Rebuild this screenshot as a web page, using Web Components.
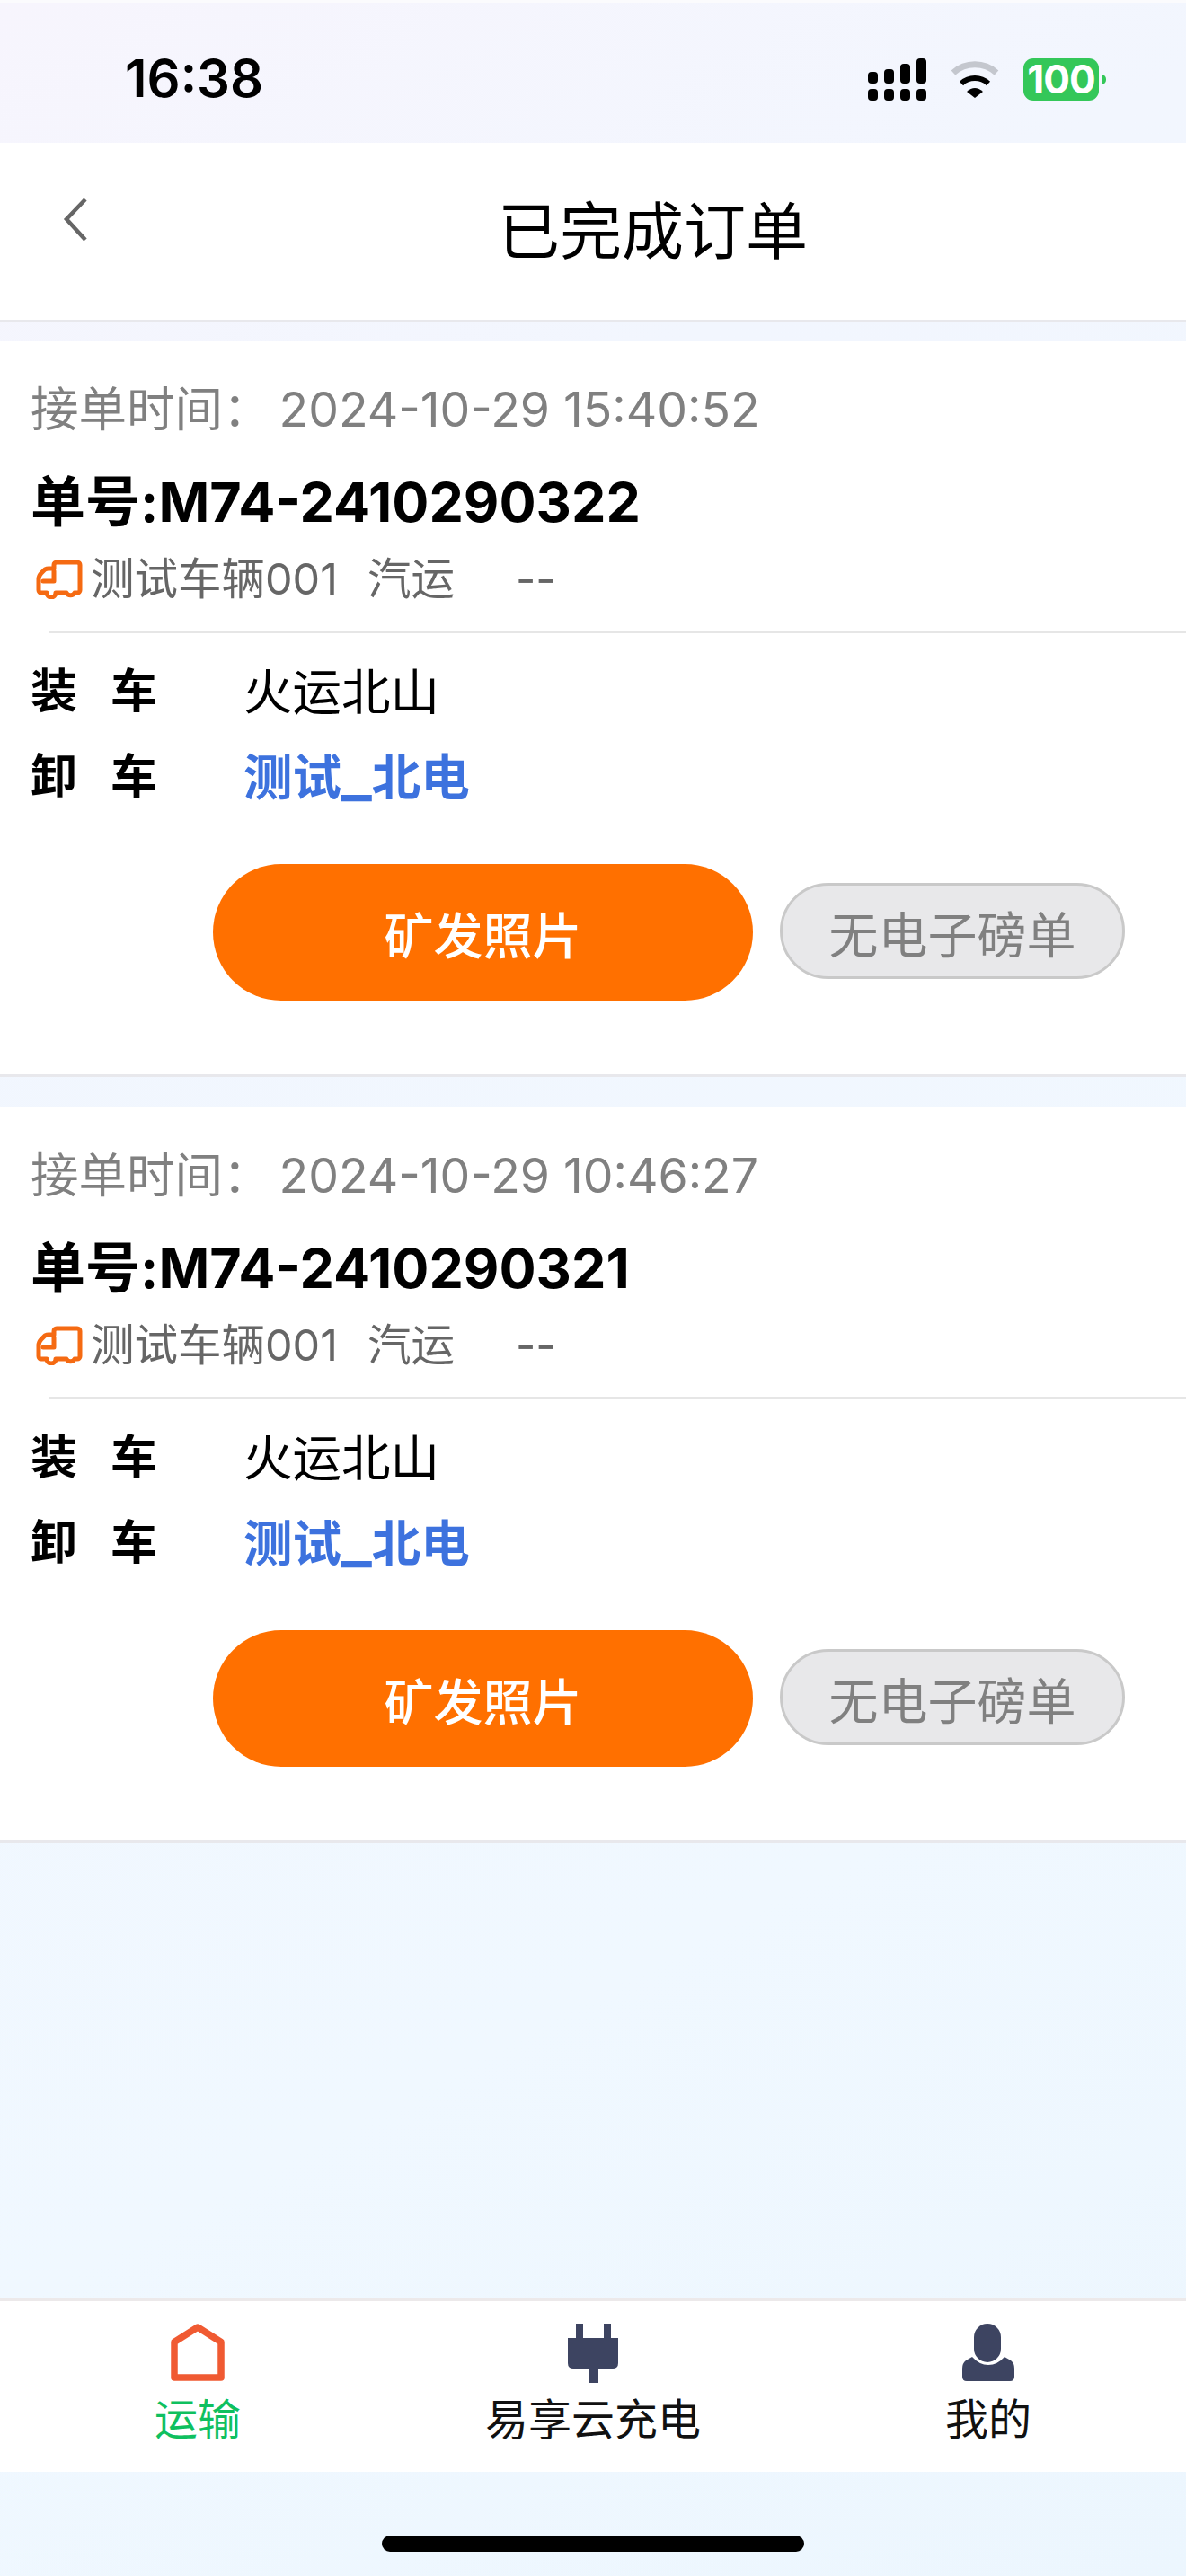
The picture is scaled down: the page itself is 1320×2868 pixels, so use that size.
<!DOCTYPE html>
<html lang="zh-CN">
<head>
<meta charset="utf-8">
<title>已完成订单</title>
<style>
html,body{margin:0;padding:0}
body{font-family:Inter,"Noto Sans CJK SC",sans-serif;color:#000}
</style>
</head>
<body>
<template id="t-screen">
<style>
:host{display:flex;flex-direction:column;width:1320px;height:2868px;overflow:hidden;background:linear-gradient(152deg,#f7f5fd 0%,#f2f6fe 22%,#f0f8ff 72%,#ecf6fe 100%)}
.fill{flex:1 1 auto}
.home{flex:0 0 116px;display:flex;justify-content:center;padding-top:71px;box-sizing:border-box}
.home i{display:block;width:470px;height:18px;border-radius:9px;background:#000}
.cards{display:flex;flex-direction:column}
::slotted(order-card){margin-top:34px}
::slotted(order-card:first-of-type){margin-top:21px}
</style>
<slot name="status"></slot><slot name="header"></slot>
<div class="cards"><slot></slot></div>
<div class="fill"></div>
<slot name="tabs"></slot>
<div class="home"><i></i></div>
</template>

<template id="t-status">
<style>
:host{display:flex;align-items:center;height:159px;box-sizing:border-box;padding:16px 89px 0 139px;border-top:3px solid #fbfbfd}
.time{font:600 58px/60px Inter,sans-serif;color:#000;position:relative;top:-2px}
.icons{margin-left:auto;display:flex;align-items:flex-start;height:48px}
svg{display:block}
.wifi{margin-left:26px;margin-top:3px}
.bat{margin-left:26px;width:84px;height:47px;border-radius:11px;background:#34c759;color:#fff;font:700 44px/47px Inter,sans-serif;text-align:center;letter-spacing:-1px}
.nub{margin:18px 0 0 3px;width:5px;height:11px;background:#34c759;border-radius:0 6px 6px 0}
</style>
<span class="time">16:38</span>
<div class="icons">
<svg width="65" height="47" viewBox="0 0 65 47" fill="#000"><rect x="0" y="15" width="11" height="13" rx="4"/><rect x="18" y="12" width="11" height="16" rx="4"/><rect x="36" y="6" width="11" height="22" rx="4"/><rect x="54" y="0" width="11" height="28" rx="4"/><rect x="0" y="34" width="11" height="13" rx="4"/><rect x="18" y="34" width="11" height="13" rx="4"/><rect x="36" y="34" width="11" height="13" rx="4"/><rect x="54" y="34" width="11" height="13" rx="4"/></svg>
<svg class="wifi" width="56" height="42" viewBox="0 0 56 42"><path d="M4 13A36 36 0 0 1 52 13" fill="none" stroke="#c4c7ce" stroke-width="7"/><path d="M13 25A22 22 0 0 1 43 25" fill="none" stroke="#000" stroke-width="6"/><path d="M19 34Q28 26 37 34L28 41Z" fill="#000"/></svg>
<div class="bat">100</div><div class="nub"></div>
</div>
</template>

<template id="t-header">
<style>
:host{display:grid;grid-template-columns:134px 1fr;align-items:center;height:200px;box-sizing:border-box;background:#fff;border-bottom:3px solid #e8e8ec}
.back{padding-left:68px;display:block;position:relative;top:-14px;grid-column:1;grid-row:1}
.title{justify-self:start;margin-left:554px;font-size:69px;line-height:80px;font-weight:400;color:#000;white-space:nowrap;grid-column:1/3;grid-row:1}
</style>
<svg class="back" width="32" height="50" viewBox="0 0 32 50"><path d="M27 3 6 25 27 48" fill="none" stroke="#666" stroke-width="4.5" stroke-linejoin="miter"/></svg>
<div class="title"><slot></slot></div>
</template>

<template id="t-card">
<style>
:host{display:block;background:#fff;border-bottom:3px solid #e8e8ec;box-sizing:border-box;height:819px;padding-top:40px;font-family:Inter,"Noto Sans CJK SC",sans-serif}
.pad{padding-left:34px}
.date{font-size:53.5px;line-height:72px;color:#808080;white-space:nowrap}
.date b{font-weight:400;margin-left:9px}
.no{margin-top:27px;font-size:61px;line-height:80px;font-weight:700;color:#000;white-space:nowrap}
.veh{margin-top:16px;height:60px;display:flex;align-items:center;font-size:48.5px;line-height:60px;color:#666;white-space:nowrap}
.veh svg{margin:0 9px 0 6px;flex:none}
.veh .k{margin-left:33px}
.veh .d{margin-left:68px}
hr{margin:27px 0 0 54px;border:0;height:3px;background:#e6e6e6}
.row{display:grid;grid-template-columns:237px 1fr;font-size:54.5px;line-height:72px;padding-left:34px;color:#000}
.row.a{margin-top:29px}.row.b{margin-top:23px}
.lbl{font-weight:700;font-size:52px;display:flex;gap:37px}
.blue{color:#3d72de;font-weight:600}
.btns{display:flex;align-items:center;gap:30px;margin-top:61px;padding-left:237px}
</style>
<div class="pad date">接单时间：<b><slot name="date"></slot></b></div>
<div class="pad no">单号:<slot name="no"></slot></div>
<div class="pad veh">
<svg width="52" height="44" viewBox="0 0 52 44" fill="none" stroke="#f56a12" stroke-width="5" stroke-linejoin="round" stroke-linecap="round"><path d="M20 10V6a3 3 0 0 1 3-3H46a3 3 0 0 1 3 3V34a3 3 0 0 1-3 3H43a5 5 0 0 1-9 0H22a5 5 0 0 1-10 0H6a3 3 0 0 1-3-3V22Q3 18 6 15L10 11Q12 10 14 10H20"/><path d="M8 24H20V13"/></svg>
<span><slot name="vehicle"></slot></span><span class="k"><slot name="kind"></slot></span><span class="d">--</span>
</div>
<hr>
<div class="row a"><span class="lbl"><span>装</span><span>车</span></span><span><slot name="from"></slot></span></div>
<div class="row b"><span class="lbl"><span>卸</span><span>车</span></span><span class="blue"><slot name="to"></slot></span></div>
<div class="btns"><slot name="actions"></slot></div>
</template>

<template id="t-pill">
<style>
:host{display:flex;align-items:center;justify-content:center;box-sizing:border-box;font-size:55px;white-space:nowrap;flex:none}
:host([kind=primary]){width:601px;height:152px;border-radius:76px;background:#ff7000;color:#fff;font-weight:500}
:host([kind=off]){width:384px;height:107px;margin-top:-3px;border-radius:54px;background:#e8e8ea;border:3px solid #c9c9c9;color:#808080}
</style>
<slot></slot>
</template>

<template id="t-tabs">
<style>
:host{display:grid;grid-template-columns:repeat(3,1fr);height:193px;box-sizing:border-box;background:#fff;border-top:3px solid #ece9ea}
</style>
<slot></slot>
</template>

<template id="t-tab">
<style>
:host{display:flex;flex-direction:column;align-items:center;padding-top:25px;font-size:48px;line-height:60px;color:#111;white-space:nowrap}
:host([active]){color:#0fc05f}
.ic{height:77px;display:flex;align-items:flex-start}
</style>
<div class="ic"><slot name="icon"></slot></div>
<slot></slot>
</template>

<app-screen>
<status-bar slot="status"></status-bar>
<page-header slot="header">已完成订单</page-header>
<order-card>
<span slot="date">2024-10-29 15:40:52</span><span slot="no">M74-2410290322</span><span slot="vehicle">测试车辆001</span><span slot="kind">汽运</span><span slot="from">火运北山</span><span slot="to">测试<span style="font-size:72px;line-height:0">_</span>北电</span>
<pill-button slot="actions" kind="primary">矿发照片</pill-button><pill-button slot="actions" kind="off">无电子磅单</pill-button>
</order-card>
<order-card>
<span slot="date">2024-10-29 10:46:27</span><span slot="no">M74-2410290321</span><span slot="vehicle">测试车辆001</span><span slot="kind">汽运</span><span slot="from">火运北山</span><span slot="to">测试<span style="font-size:72px;line-height:0">_</span>北电</span>
<pill-button slot="actions" kind="primary">矿发照片</pill-button><pill-button slot="actions" kind="off">无电子磅单</pill-button>
</order-card>
<tab-bar slot="tabs">
<tab-item active><svg slot="icon" width="60" height="64" viewBox="0 0 60 64"><path d="M4 20.5 30 4 56 20.5V60H4Z" fill="none" stroke="#f05a32" stroke-width="7.5" stroke-linejoin="round"/></svg>运输</tab-item>
<tab-item><svg slot="icon" width="56" height="66" viewBox="0 0 56 66" fill="#3d4461"><rect x="9" y="0" width="8" height="18"/><rect x="40" y="0" width="8" height="18"/><path d="M0 16H56V44Q56 50 50 50H34V66H23V50H6Q0 50 0 44Z"/></svg>易享云充电</tab-item>
<tab-item><svg slot="icon" width="58" height="64" viewBox="0 0 58 64" fill="#3d4461"><rect x="13" y="0" width="30" height="43" rx="15"/><path d="M0 53Q0 55 0 50Q0 44 4 41L11 37Q19 46 29 46Q39 46 47 37L54 41Q58 44 58 50V59Q58 64 53 64H5Q0 64 0 59Z"/></svg>我的</tab-item>
</tab-bar>
</app-screen>
<script>
const reg=(n,t)=>customElements.define(n,class extends HTMLElement{constructor(){super();this.attachShadow({mode:'open'}).appendChild(document.getElementById(t).content.cloneNode(true))}});
reg('app-screen','t-screen');reg('status-bar','t-status');reg('page-header','t-header');reg('order-card','t-card');reg('pill-button','t-pill');reg('tab-bar','t-tabs');reg('tab-item','t-tab');
</script>
</body>
</html>
